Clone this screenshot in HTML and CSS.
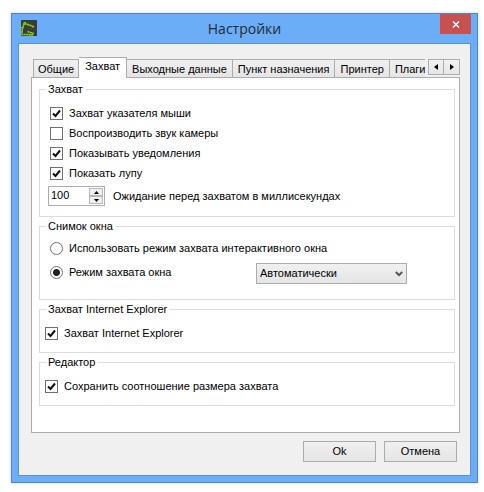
FILE: index.html
```
<!DOCTYPE html>
<html lang="ru">
<head>
<meta charset="utf-8">
<title>Настройки</title>
<link rel="stylesheet" href="styles.css">
</head>
<body>
<main class="window">
  <header class="titlebar">
    <svg class="app-icon" viewBox="0 0 16 16" aria-hidden="true">
      <path fill="#3c3c3c" d="M0 0h16v16H0z"/>
      <path fill="none" stroke="#7fd80a" stroke-width="1.700" stroke-dasharray="2.200 0.400" d="M13 7 8.500 5 3 3.500 2 7 1 10.500V14.500H5L11 15 12.500 13M6.500 11.500 9.500 12.500 12.500 13"/>
      <path fill="#7fd80a" d="M3 2h2v1H3zM0 7h1v1H0z"/>
    </svg>
    <h1 class="title">Настройки</h1>
    <button class="close" type="button" aria-label="Закрыть">
      <svg viewBox="0 0 8 7" aria-hidden="true"><path d="M1 0.500 7 6.500M7 0.500 1 6.500"/></svg>
    </button>
  </header>
  <form class="client">
    <div class="tabs">
      <div class="tab-list" role="tablist">
        <button class="tab" type="button" role="tab">Общие</button>
        <button class="tab active" type="button" role="tab" aria-selected="true">Захват</button>
        <button class="tab" type="button" role="tab">Выходные данные</button>
        <button class="tab" type="button" role="tab">Пункт назначения</button>
        <button class="tab" type="button" role="tab">Принтер</button>
        <button class="tab last" type="button" role="tab">Плаги</button>
      </div>
      <div class="scroller">
        <button type="button" aria-label="Назад"><svg viewBox="0 0 4 6"><path d="M4 0v6L0 3z"/></svg></button>
        <button type="button" aria-label="Вперёд"><svg viewBox="0 0 4 6"><path d="M0 0v6l4-3z"/></svg></button>
      </div>
    </div>
    <div class="page" role="tabpanel">
      <fieldset class="group capture">
        <legend>Захват</legend>
        <label class="option"><input type="checkbox" checked>Захват указателя мыши</label>
        <label class="option"><input type="checkbox">Воспроизводить звук камеры</label>
        <label class="option"><input type="checkbox" checked>Показывать уведомления</label>
        <label class="option"><input type="checkbox" checked>Показать лупу</label>
        <div class="delay">
          <div class="spinner">
            <input id="delay" type="text" value="100">
            <div class="arrows">
              <button type="button" aria-label="Больше"><svg viewBox="0 0 5 3"><path d="M0 3h5L2.500 0z"/></svg></button>
              <button type="button" aria-label="Меньше"><svg viewBox="0 0 5 3"><path d="M0 0h5L2.500 3z"/></svg></button>
            </div>
          </div>
          <label for="delay">Ожидание перед захватом в миллисекундах</label>
        </div>
      </fieldset>
      <fieldset class="group shot">
        <legend>Снимок окна</legend>
        <label class="option"><input type="radio" name="mode">Использовать режим захвата интерактивного окна</label>
        <div class="mode-row">
          <label class="option"><input type="radio" name="mode" checked>Режим захвата окна</label>
          <div class="combo">
            <select aria-label="Режим захвата окна"><option>Автоматически</option></select>
            <svg viewBox="0 0 8 6" aria-hidden="true"><path d="M0.800 1 4 4.200 7.200 1"/></svg>
          </div>
        </div>
      </fieldset>
      <fieldset class="group single">
        <legend>Захват Internet Explorer</legend>
        <label class="option"><input type="checkbox" checked>Захват Internet Explorer</label>
      </fieldset>
      <fieldset class="group single">
        <legend>Редактор</legend>
        <label class="option"><input type="checkbox" checked>Сохранить соотношение размера захвата</label>
      </fieldset>
    </div>
    <footer class="actions">
      <button class="action" type="button">Ok</button>
      <button class="action" type="button">Отмена</button>
    </footer>
  </form>
</main>
</body>
</html>
```
FILE: styles.css
```
* { box-sizing: border-box; }

body {
  margin: 0;
  padding: 13px 6px 9px 11px;
  background: #fff;
  color: #000;
  font: 11px/13px "Liberation Sans", Arial, sans-serif;
}

button, input, select {
  margin: 0;
  padding: 0;
  border-radius: 0;
  color: inherit;
  font: inherit;
}

svg { display: block; }

.window {
  padding: 0 6px 6px;
  border: 1px solid #4a86c8;
  background: #6badf6;
  box-shadow: 0 0 4px rgba(0, 0, 0, 0.15);
}

.titlebar {
  display: grid;
  grid-template-columns: 31px 1fr 31px;
  height: 29px;
}

.app-icon {
  width: 16px;
  height: 16px;
  margin: 6px 0 0 3px;
}

.title {
  margin: 0;
  font: 14px/29px "Open Sans", "Noto Sans", sans-serif;
  color: #222a33;
  text-align: center;
}

.close {
  display: grid;
  place-items: center;
  height: 20px;
  border: 0;
  background: #c75050;
}

.close svg {
  width: 8px;
  height: 7px;
  fill: none;
  stroke: #fff;
  stroke-width: 1.5;
}

.client {
  padding: 13px 10px 13px 12px;
  border: 1px solid #5a92cc;
  background: #f0f0f0;
}

.tabs {
  position: relative;
  display: flex;
  align-items: flex-end;
  height: 21px;
  margin-bottom: -1px;
  padding-left: 2px;
}

.tab-list {
  display: flex;
  flex: 1;
  align-items: flex-start;
  height: 21px;
  min-width: 0;
  overflow: hidden;
}

.tab {
  flex: none;
  height: 18px;
  margin-top: 2px;
  padding: 2px 5px 0;
  border: 1px solid #acacac;
  border-bottom: 0;
  border-left-width: 0;
  background: linear-gradient(#f0f0f0, #e5e5e5);
  white-space: nowrap;
}

.tab:first-child {
  padding: 2px 4px 0;
  border-left-width: 1px;
}

.tab.active {
  height: 21px;
  margin-top: 0;
  padding: 0 6px 4px;
  background: #fff;
}

.tab.last {
  padding-right: 0;
  border-right: 0;
}

.scroller {
  display: flex;
  align-self: flex-start;
  margin: 2px 0 0 1px;
}

.scroller button {
  display: grid;
  place-items: center;
  width: 16px;
  height: 16px;
  border: 1px solid #acacac;
  background: linear-gradient(#f2f2f2, #e6e6e6);
}

.scroller button + button { border-left: 0; }

.scroller svg { width: 4px; height: 6px; }

.page {
  display: flex;
  flex-direction: column;
  gap: 3px;
  padding: 5px 4px 26px 7px;
  border: 1px solid #acacac;
  background: #fff;
}

.group {
  min-width: 0;
  margin: 0;
  padding: 0 10px;
  border: 1px solid #dcdcdc;
}

legend {
  height: 13px;
  margin-left: -4px;
  padding: 0 3px 0 2px;
}

.option {
  display: flex;
  align-items: center;
  gap: 6px;
  height: 19px;
}

.option input {
  flex: none;
  width: 13px;
  height: 13px;
  border: 1px solid #707070;
  background: #fff;
  appearance: none;
}

.option input[type="checkbox"]:checked {
  background: #fff url("data:image/svg+xml,%3Csvg xmlns='http://www.w3.org/2000/svg' viewBox='0 0 11 11'%3E%3Cpath d='M2 5.500 4.500 8 9 2.500' fill='none' stroke='%23111' stroke-width='2'/%3E%3C/svg%3E");
}

.option input[type="radio"] {
  border-radius: 50%;
}

.option input[type="radio"]:checked {
  background: radial-gradient(circle, #222 3px, #fff 4px);
}

.capture {
  padding-top: 8px;
  padding-bottom: 10px;
}

.capture .option { margin-bottom: 1px; }

.delay {
  display: flex;
  align-items: center;
  gap: 8px;
  margin: 3px 0 0 -2px;
}

.spinner {
  display: flex;
  width: 57px;
  height: 20px;
  border: 1px solid #abadb3;
  background: #fff;
}

.spinner input {
  flex: 1;
  min-width: 0;
  padding: 0 0 2px 2px;
  border: 0;
  background: transparent;
}

.arrows {
  display: grid;
  grid-template-rows: 1fr 1fr;
  width: 15px;
  padding: 1px 1px 1px 0;
}

.arrows button {
  display: grid;
  place-items: center;
  border: 1px solid #b8b8b8;
  background: #efefef;
}

.arrows svg { width: 5px; height: 3px; }

.shot { padding-top: 6px; padding-bottom: 15px; }

.mode-row {
  display: grid;
  grid-template-columns: 206px 151px;
  align-items: start;
  margin-top: 5px;
}

.combo { position: relative; }

.combo select {
  width: 100%;
  height: 21px;
  padding: 0 16px 0 3px;
  border: 1px solid #acacac;
  background: linear-gradient(#f0f0f0, #e5e5e5);
  appearance: none;
}

.combo svg {
  position: absolute;
  top: 8px;
  right: 4px;
  width: 8px;
  height: 6px;
  fill: none;
  stroke: #555;
  stroke-width: 2;
  pointer-events: none;
}

.single { padding: 8px 5px 9px; }
.single legend { margin-left: 1px; }

.actions {
  display: flex;
  justify-content: flex-end;
  gap: 8px;
  padding: 8px 3px 0 0;
}

.action {
  width: 73px;
  height: 21px;
  border: 1px solid #acacac;
  background: linear-gradient(#f0f0f0, #e5e5e5);
}
```
